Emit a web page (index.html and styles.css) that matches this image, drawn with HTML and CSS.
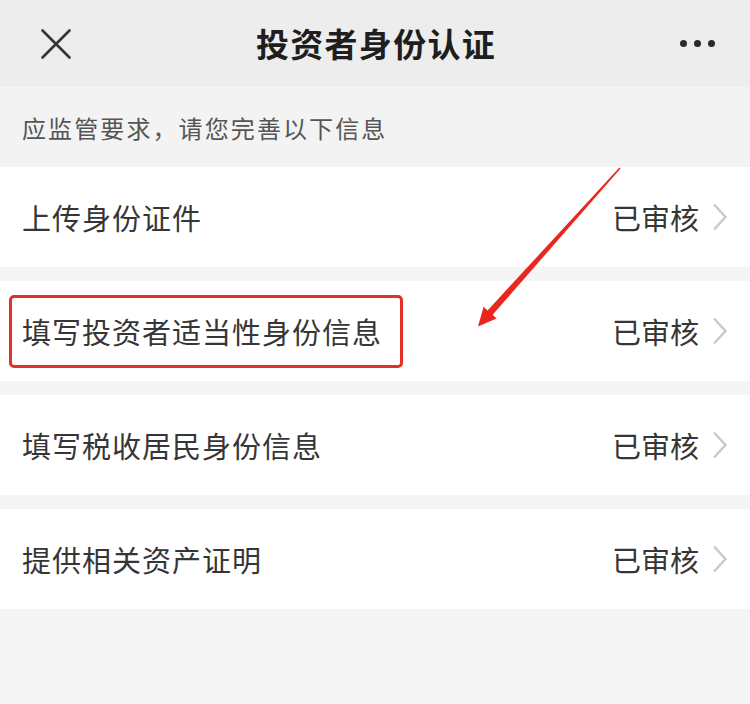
FILE: index.html
```html
<!DOCTYPE html>
<html lang="zh">
<head>
<meta charset="utf-8">
<title>投资者身份认证</title>
<link rel="stylesheet" href="styles.css">
</head>
<body>
<div class="page">
  <header class="nav">
    <div class="nav-left">
      <svg class="icon-close" width="30" height="30" viewBox="0 0 30 30">
        <path d="M1.5 1.5 L28.5 28.5 M28.5 1.5 L1.5 28.5" stroke="#333" stroke-width="2.6" stroke-linecap="round" fill="none"/>
      </svg>
    </div>
    <h1 class="nav-title">投资者身份认证</h1>
    <div class="nav-right">
      <span class="dot"></span><span class="dot"></span><span class="dot"></span>
    </div>
  </header>

  <div class="notice">应监管要求，请您完善以下信息</div>

  <ul class="list">
    <li class="row">
      <span class="label">上传身份证件</span>
      <span class="status">已审核</span>
      <svg class="chev" width="16" height="28" viewBox="0 0 16 28"><polyline points="2,1.5 13.5,14 2,26.5" fill="none" stroke="#c9c9c9" stroke-width="2.4"/></svg>
    </li>
    <li class="row row-marked">
      <span class="label">填写投资者适当性身份信息</span>
      <span class="status">已审核</span>
      <svg class="chev" width="16" height="28" viewBox="0 0 16 28"><polyline points="2,1.5 13.5,14 2,26.5" fill="none" stroke="#c9c9c9" stroke-width="2.4"/></svg>
      <span class="mark-box"></span>
    </li>
    <li class="row">
      <span class="label">填写税收居民身份信息</span>
      <span class="status">已审核</span>
      <svg class="chev" width="16" height="28" viewBox="0 0 16 28"><polyline points="2,1.5 13.5,14 2,26.5" fill="none" stroke="#c9c9c9" stroke-width="2.4"/></svg>
    </li>
    <li class="row">
      <span class="label">提供相关资产证明</span>
      <span class="status">已审核</span>
      <svg class="chev" width="16" height="28" viewBox="0 0 16 28"><polyline points="2,1.5 13.5,14 2,26.5" fill="none" stroke="#c9c9c9" stroke-width="2.4"/></svg>
    </li>
  </ul>

  <svg class="arrow" width="750" height="704" viewBox="0 0 750 704">
    <polygon points="619.4,167.5 620.6,168.5 492.6,314.8 496.6,318.4 478,326.5 483.6,306.8 487.6,310.4" fill="#e8281e"/>
  </svg>
</div>
</body>
</html>
```

FILE: styles.css
```css
* { box-sizing: border-box; }

html, body {
  margin: 0;
  padding: 0;
}

body {
  background: #f5f5f5;
  font-family: "Noto Sans CJK SC", "Noto Sans", sans-serif;
  color: #333;
}

.page {
  position: relative;
  width: 750px;
  min-height: 704px;
  background: #f5f5f5;
}

.nav {
  height: 87px;
  background: #ededed;
  display: grid;
  grid-template-columns: 1fr auto 1fr;
  align-items: center;
}

.nav-left {
  padding-left: 41px;
  display: flex;
  align-items: center;
}

.icon-close {
  display: block;
}

.nav-title {
  margin: 0;
  font-size: 33px;
  font-weight: 700;
  letter-spacing: 1.3px;
  color: #1e1e1e;
  line-height: 1;
  padding-left: 2px;
}

.nav-right {
  display: flex;
  justify-content: flex-end;
  gap: 7px;
  padding-right: 35px;
}

.dot {
  width: 7px;
  height: 7px;
  border-radius: 50%;
  background: #2a2a2a;
}

.notice {
  height: 80px;
  display: flex;
  align-items: center;
  padding-left: 22px;
  font-size: 24px;
  letter-spacing: 2.1px;
  color: #555;
  background: #f3f3f3;
}

.list {
  list-style: none;
  margin: 0;
  padding: 0;
  display: flex;
  flex-direction: column;
  gap: 14px;
}

.row {
  position: relative;
  height: 100px;
  background: #fff;
  display: flex;
  align-items: center;
  padding-left: 22px;
  padding-right: 22px;
}

.label {
  flex: 1;
  font-size: 29px;
  letter-spacing: 1px;
  color: #363636;
}

.status {
  font-size: 29px;
  letter-spacing: 0;
  color: #363636;
  margin-right: 13px;
}

.chev {
  display: block;
}

.mark-box {
  position: absolute;
  left: 9px;
  top: 14px;
  width: 394px;
  height: 73px;
  border: 3px solid #e3302a;
  border-radius: 5px;
}

.arrow {
  position: absolute;
  left: 0;
  top: 0;
  pointer-events: none;
}
```
